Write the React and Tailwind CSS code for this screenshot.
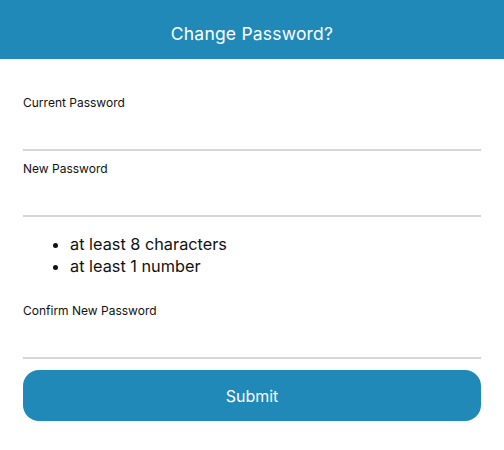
function Field({ label }) {
  return (
    <div className="flex flex-col">
      <label className="text-[12px] leading-4 text-[#111]">{label}</label>
      <input
        type="password"
        className="h-[40px] border-b-2 border-[#d6d6d6] outline-none bg-transparent"
      />
    </div>
  )
}

export default function App() {
  return (
    <div className="w-[504px] h-[450px] bg-white" style={{ fontFamily: 'Inter, "Noto Sans", sans-serif' }}>
      <header className="h-[59px] bg-[#2089b8] flex items-center justify-center">
        <h1 className="text-white text-[17.5px] leading-none pt-[8px] tracking-[0.2px]">Change Password?</h1>
      </header>
      <div className="px-[23px] pt-[36px]">
        <Field label="Current Password" />
        <div className="mt-[10px]">
          <Field label="New Password" />
        </div>
        <ul className="list-disc pl-[47px] mt-[16px] text-[16.3px] leading-[22px] text-[#111]">
          <li>at least 8 characters</li>
          <li>at least 1 number</li>
        </ul>
        <div className="mt-[26px]">
          <Field label="Confirm New Password" />
        </div>
        <button className="mt-[11px] w-full h-[51px] rounded-[16px] bg-[#2089b8] text-white text-[16px]">
          Submit
        </button>
      </div>
    </div>
  )
}
